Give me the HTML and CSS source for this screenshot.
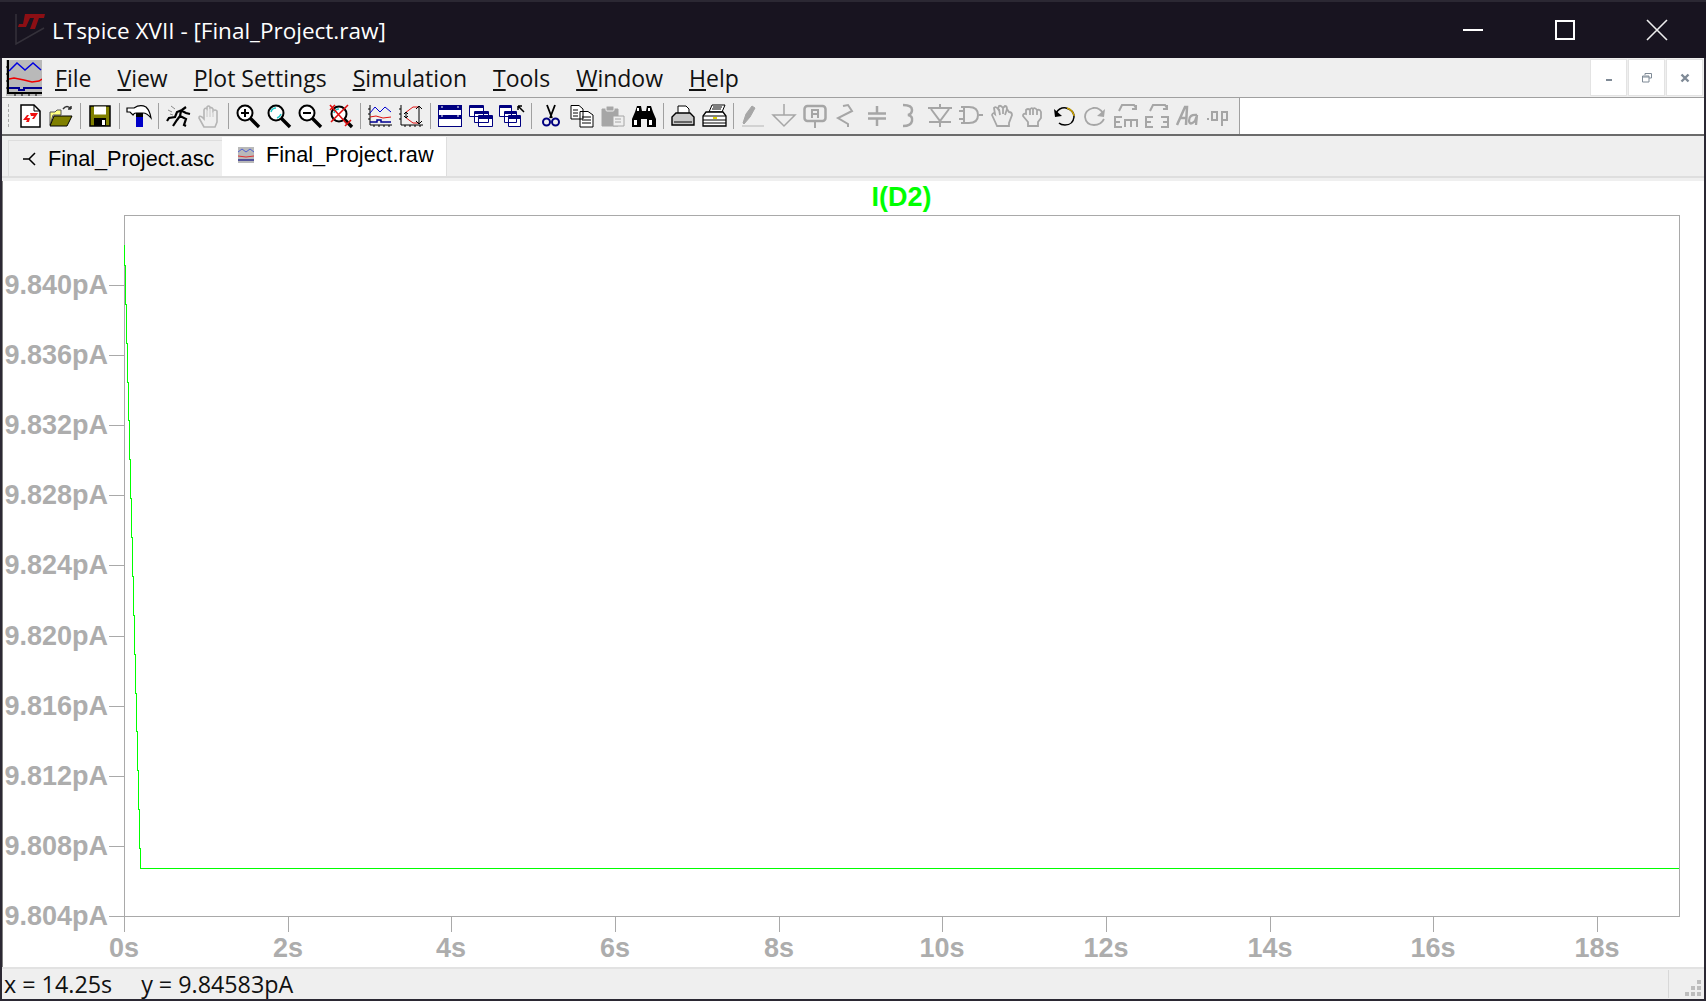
FILE: index.html
```html
<!DOCTYPE html>
<html lang="en">
<head>
    <meta charset="UTF-8">
    <title>LTspice XVII - [Final_Project.raw]</title>
    <link rel="stylesheet" href="styles.css">
</head>
<body>
<div class="window">
    <div class="titlebar">
        <svg class="app-logo" width="32" height="36" viewBox="0 0 32 36">
            <path d="M1 2 L1 32 L29 16" fill="none" stroke="#34313a" stroke-width="1.5"/>
            <path d="M10 2 H30 L29 6 H24 L20 17 H15 L19 6 H15 L11 15 H3 L4 12 H8 Z" fill="#8c0f14"/>
        </svg>
        <span class="app-title">LTspice XVII - [Final_Project.raw]</span>
        <div class="win-buttons">
            <svg class="win-btn" width="22" height="22" viewBox="0 0 22 22"><path d="M1 11 H21" stroke="#fff" stroke-width="2"/></svg>
            <svg class="win-btn" width="22" height="22" viewBox="0 0 22 22"><rect x="2" y="2" width="18" height="18" fill="none" stroke="#fff" stroke-width="2"/></svg>
            <svg class="win-btn" width="22" height="22" viewBox="0 0 22 22"><path d="M1 1 L21 21 M21 1 L1 21" stroke="#eee" stroke-width="1.6"/></svg>
        </div>
    </div>

    <div class="menubar">
        <svg class="menu-icon" width="36" height="36" viewBox="0 0 36 36">
            <rect width="36" height="36" fill="#b9b9b9"/>
            <path d="M2 0 V33 H36" fill="none" stroke="#000" stroke-width="2"/>
            <path d="M0 7 H3 M0 14 H3 M0 21 H3 M0 28 H3 M9 33 V36 M16 33 V36 M23 33 V36 M30 33 V36" stroke="#000"/>
            <path d="M3 11 L11 3 L19 10 L27 3 L35 10" fill="none" stroke="#0000e0" stroke-width="1.5"/>
            <path d="M3 19 L8 18 L18 20 L26 22 L33 21 L36 19" fill="none" stroke="#f00000" stroke-width="1.5"/>
            <path d="M3 28 H13 V30 H18 V28 H36" fill="none" stroke="#000090" stroke-width="2"/>
        </svg>
        <nav class="menu">
            <span><u>F</u>ile</span>
            <span><u>V</u>iew</span>
            <span><u>P</u>lot Settings</span>
            <span><u>S</u>imulation</span>
            <span><u>T</u>ools</span>
            <span><u>W</u>indow</span>
            <span><u>H</u>elp</span>
        </nav>
        <div class="mdi-buttons">
            <div class="mdi-btn"><svg width="8" height="8" viewBox="0 0 8 8"><path d="M1 6 H7" stroke="#7f8a96" stroke-width="2"/></svg></div>
            <div class="mdi-btn"><svg width="10" height="10" viewBox="0 0 10 10"><path d="M3 2 V0.5 H9.5 V5 H7 M0.5 3 H7 V9 H0.5 Z M0.5 4 H7" fill="none" stroke="#7f8a96"/></svg></div>
            <div class="mdi-btn"><svg width="10" height="10" viewBox="0 0 10 10"><path d="M1.5 1.5 L8.5 8.5 M8.5 1.5 L1.5 8.5" stroke="#7f8a96" stroke-width="2.4"/></svg></div>
        </div>
    </div>

    <div class="toolbar">
        <div class="tools">
            <div class="grip"></div>
            <div class="tool"><svg class="ico" viewBox="0 0 24 24"><path d="M3 1 H16 L22 7 V23 H3 Z" fill="#fff" stroke="#000" stroke-width="1.5"/><path d="M16 1 V7 H22" fill="none" stroke="#000"/><path d="M5 16 L9 11 H11 L9 14 H12 L11 18 H8 L9 16 Z M12 9 H20 L16 15 H14 L16 12 H13 Z" fill="#f01010"/></svg></div>
            <div class="tool"><svg class="ico" viewBox="0 0 24 24"><path d="M1 8 H6 L8 6 H12 V11 H4 L1 21 Z" fill="#ffff80" stroke="#555"/><path d="M1 22 L5 12 H23 L18 22 Z" fill="#808000" stroke="#000"/><path d="M14 5 Q18 0 22 5 M22 5 L19 5 M22 5 L22 2" fill="none" stroke="#333" stroke-width="1.5"/></svg></div>
            <div class="sep"></div>
            <div class="tool"><svg class="ico" viewBox="0 0 24 24"><rect x="2" y="2" width="20" height="20" fill="#808000" stroke="#000" stroke-width="1.5"/><rect x="6" y="2.5" width="12" height="8" fill="#fff"/><rect x="6" y="14" width="12" height="8" fill="#000"/><rect x="14" y="16" width="3" height="5" fill="#fff"/></svg></div>
            <div class="sep"></div>
            <div class="tool"><svg class="ico" viewBox="0 0 24 24"><path d="M0 4 H7 Q13 0 19 3 Q23 7 24 14 Q20 9 16 9 H9 Q7 9 6 11 L3 8 H0 Z" fill="#fff" stroke="#000" stroke-width="1.2"/><rect x="9" y="9" width="7" height="4" fill="#000"/><rect x="9" y="13" width="7" height="10" fill="#0000c8"/></svg></div>
            <div class="sep"></div>
            <div class="tool"><svg class="ico" viewBox="0 0 24 24"><path d="M5 2 L9 5 M2 6 L6 8 M4 10 L7 11" stroke="#8a8a8a"/><path d="M20 3 L16 6 L11 8 L9 13 L3 14 L1 17 M15 7 L14 12 L20 15 L18 21 L20 22 M14 12 L11 16 L7 22 M16 7 L20 9 L24 10" fill="none" stroke="#000" stroke-width="2.2"/></svg></div>
            <div class="tool off"><svg class="ico" viewBox="0 0 24 24"><path d="M7 23 L2 14 Q2 11 5 13 L7 15 V6 Q8 3 10 5 V3 Q11.500 1 13 3 V4 Q15 3 16 5 V7 Q18 5 20 7 V18 L18 23 Z" fill="#efefef" stroke="#b5b5b5" stroke-width="1.6"/><path d="M10 5 V13 M13 4 V13 M16 6 V13" stroke="#c8c8c8"/></svg></div>
            <div class="sep"></div>
            <div class="tool"><svg class="ico" viewBox="0 0 24 24"><circle cx="9" cy="9" r="7.500" fill="#fff" stroke="#000" stroke-width="2"/><path d="M5 9 H13 M9 5 V13" stroke="#000" stroke-width="2"/><path d="M14 14 L23 23" stroke="#000" stroke-width="3.400"/></svg></div>
            <div class="tool"><svg class="ico" viewBox="0 0 24 24"><circle cx="9" cy="9" r="7.500" fill="#fff" stroke="#000" stroke-width="2"/><path d="M4 8 Q5 4 9 4 M10 14 Q13 13 14 10" fill="none" stroke="#20c8c8" stroke-width="1.500"/><path d="M14 14 L23 23" stroke="#000" stroke-width="3.400"/></svg></div>
            <div class="tool"><svg class="ico" viewBox="0 0 24 24"><circle cx="9" cy="9" r="7.500" fill="#fff" stroke="#000" stroke-width="2"/><path d="M5 9 H13" stroke="#000" stroke-width="2"/><path d="M14 14 L23 23" stroke="#000" stroke-width="3.400"/></svg></div>
            <div class="tool"><svg class="ico" viewBox="0 0 24 24"><circle cx="10" cy="10" r="7.500" fill="#fff" stroke="#000" stroke-width="2"/><path d="M5 9 Q6 5 10 5" fill="none" stroke="#20c8c8" stroke-width="1.500"/><path d="M15 15 L23 23" stroke="#000" stroke-width="3.400"/><path d="M1 1 L18 20 M19 1 L2 18 M1 6 L6 1 M16 22 L22 16" stroke="#e01010" stroke-width="1.600"/></svg></div>
            <div class="sep"></div>
            <div class="tool"><svg class="ico" viewBox="0 0 24 24"><path d="M2 1 V21 H24 M0 5 H2 M0 10 H2 M0 15 H2 M6 21 V23 M11 21 V23 M16 21 V23 M21 21 V23" fill="none" stroke="#000"/><path d="M2 9 L7 3 L12 8 L17 3 L23 8" fill="none" stroke="#0000d0"/><path d="M2 13 L8 12 L15 14 L23 13" fill="none" stroke="#e01010"/><path d="M2 18 H9 V16 H13 V18 H23" fill="none" stroke="#000090" stroke-width="1.500"/></svg></div>
            <div class="tool"><svg class="ico" viewBox="0 0 24 24"><path d="M2 1 V21 H24 M0 5 H2 M0 10 H2 M0 15 H2 M6 21 V23 M11 21 V23 M16 21 V23 M21 21 V23" fill="none" stroke="#000"/><path d="M6 9 L14 3 H20 M6 13 L14 19 H20" fill="none" stroke="#e01010"/><path d="M20 2 V20 M17 5 L20 2 L23 5 M17 17 L20 20 L23 17 M7 8 V14 M5 10 L7 8 L9 10 M5 12 L7 14 L9 12" fill="none" stroke="#000"/></svg></div>
            <div class="sep"></div>
            <div class="tool"><svg class="ico" viewBox="0 0 24 24"><rect x="0.500" y="1.500" width="23" height="21" fill="#fff" stroke="#000080"/><rect x="1" y="2" width="22" height="4" fill="#000080"/><rect x="1" y="11" width="22" height="4" fill="#000080"/><path d="M3 3 H5 M19 3 H21 M3 12 H5 M19 12 H21" stroke="#fff"/></svg></div>
            <div class="tool"><svg class="ico" viewBox="0 0 24 24"><path d="M0.500 1.500 H14.500 V12.500 H0.500 Z M5.500 7.500 H19.500 V18.500 H5.500 Z M9.500 11.500 H23.500 V22.500 H9.500 Z" fill="#fff" stroke="#000080"/><path d="M1 2 H14 V4 H1 Z M6 8 H19 V10 H6 Z M10 12 H23 V15 H10 Z" fill="#000080"/></svg></div>
            <div class="tool"><svg class="ico wide" viewBox="0 0 26 24"><path d="M0.500 1.500 H12.500 V12.500 H0.500 Z M5.500 7.500 H17.500 V18.500 H5.500 Z M9.500 11.500 H21.500 V22.500 H9.500 Z" fill="#fff" stroke="#000080"/><path d="M1 2 H12 V4 H1 Z M6 8 H17 V10 H6 Z M10 12 H21 V15 H10 Z" fill="#000080"/><path d="M19 2 H23 M19 2 V6 M19 2 L25 8" fill="none" stroke="#000" stroke-width="1.500"/></svg></div>
            <div class="sep"></div>
            <div class="tool"><svg class="ico" viewBox="0 0 24 24"><path d="M8 1 L13 14 M16 1 L11 14" stroke="#000" stroke-width="1.800"/><circle cx="7.500" cy="18" r="3.500" fill="none" stroke="#000080" stroke-width="2"/><circle cx="16.500" cy="18" r="3.500" fill="none" stroke="#000080" stroke-width="2"/></svg></div>
            <div class="tool"><svg class="ico" viewBox="0 0 24 24"><path d="M1 1.500 H9 L13 5 V15 H1 Z M10 7.500 H18 L23 11 V23 H10 Z" fill="#fff" stroke="#000"/><path d="M3 6 H8 M3 9 H8 M3 12 H8 M12 13 H21 M12 16 H21 M12 19 H21" stroke="#000"/></svg></div>
            <div class="tool off"><svg class="ico" viewBox="0 0 24 24"><path d="M1 5 H17 V22 H1 Z" fill="#a6a6a6" stroke="#a6a6a6"/><rect x="5" y="2" width="8" height="5" rx="1" fill="#a6a6a6" stroke="#efefef"/><path d="M12 12 H23 V22 H12 Z" fill="#efefef" stroke="#a6a6a6"/><path d="M14 15 H20 M14 18 H20" stroke="#a6a6a6"/></svg></div>
            <div class="tool"><svg class="ico" viewBox="0 0 24 24"><path d="M3 8 L5 2 H9 L10 7 H14 L15 2 H19 L21 8 L24 15 V23 H15 V15 H9 V23 H0 V15 Z" fill="#000"/><rect x="2" y="16" width="3" height="5" fill="#fff"/><rect x="17" y="16" width="3" height="5" fill="#fff"/><rect x="5" y="4" width="2" height="3" fill="#fff"/><rect x="16" y="4" width="2" height="3" fill="#fff"/></svg></div>
            <div class="sep"></div>
            <div class="tool"><svg class="ico" viewBox="0 0 24 24"><path d="M7 9 V2 H15 L18 5 V9" fill="#fff" stroke="#000"/><path d="M5 9 H19 L23 13 V21 H1 V13 Z" fill="#c8c8c8" stroke="#000" stroke-width="1.400"/><path d="M3 18 H21" stroke="#000"/></svg></div>
            <div class="tool"><svg class="ico" viewBox="0 0 24 24"><path d="M7 8 L10 1 H23 L20 8 Z" fill="#fff" stroke="#000"/><path d="M11 3 H20 M10 5 H19" stroke="#000"/><path d="M4 8 H21 L24 12 V22 H1 V12 Z" fill="#fff" stroke="#000" stroke-width="1.300"/><path d="M1 12 H24 M1 16 H24 M1 19 H24" stroke="#000"/><path d="M11 14 H15" stroke="#e0d000" stroke-width="2"/></svg></div>
            <div class="sep"></div>
            <div class="tool off"><svg class="ico" viewBox="0 0 24 24"><path d="M2 19 L5 10 L11 2 L14 4 L9 13 L3 20 Z" fill="#a6a6a6" stroke="#a6a6a6"/><path d="M1 22 H23" stroke="#b5b5b5"/></svg></div>
            <div class="tool off"><svg class="ico" viewBox="0 0 24 24"><path d="M12 0 V11 M1 11 H23 L12 22 Z" fill="none" stroke="#a6a6a6" stroke-width="1.500"/></svg></div>
            <div class="tool off"><svg class="ico" viewBox="0 0 24 24"><rect x="1.500" y="2" width="21" height="15" rx="3" fill="none" stroke="#a6a6a6" stroke-width="2.500"/><path d="M9 14 V6 H15 V14 M9 10 H15 M12 17 V24" fill="none" stroke="#a6a6a6" stroke-width="2"/></svg></div>
            <div class="tool off"><svg class="ico" viewBox="0 0 24 24"><path d="M9 2 L14 1 L18 7 L4 14 L14 20 V23" fill="none" stroke="#a6a6a6" stroke-width="2"/></svg></div>
            <div class="tool off"><svg class="ico" viewBox="0 0 24 24"><path d="M12 2 V9 M12 15 V22 M3 9.500 H21 M3 14.500 H21" stroke="#a6a6a6" stroke-width="2.500"/></svg></div>
            <div class="tool off"><svg class="ico" viewBox="0 0 24 24"><path d="M7 1 Q16 1 16 6 Q16 10 12 11 Q17 12 16 17 Q15 22 7 22" fill="none" stroke="#a6a6a6" stroke-width="2.500"/></svg></div>
            <div class="tool off dev diode"><svg class="ico" viewBox="0 0 24 24"><path d="M0 4 H24 M1 18 H23 M12 0 V4 M12 18 V23 M3 5 L12 17 L21 5" fill="none" stroke="#a6a6a6" stroke-width="2"/></svg></div>
            <div class="tool off dev"><svg class="ico" viewBox="0 0 24 24"><path d="M0 7 H4 M0 15 H4 M20 11 H24 M2 3 H10 Q19 3 19 11 Q19 19 10 19 H2 H5 V3" fill="none" stroke="#a6a6a6" stroke-width="2"/></svg></div>
            <div class="tool off dev"><svg class="ico" viewBox="0 0 24 24"><path d="M7 22 L2 11 Q3 8 5 10 L4 4 Q6 2 8 5 L9 2 Q11 1 13 4 L15 2 Q17 2 17 5 L19 8 Q22 8 22 11 L19 19 V22 Z M9 5 L10 11 M13 4 L13 10 M17 5 L15 11" fill="none" stroke="#a6a6a6" stroke-width="1.800"/></svg></div>
            <div class="tool off dev"><svg class="ico" viewBox="0 0 24 24"><path d="M7 22 V18 L2 12 Q2 9 5 10 V6 Q7 4 9 6 Q10 3 12 5 Q14 3 16 6 Q19 5 20 8 V14 L17 18 V22 Z M9 6 V11 M12 5 V11 M16 6 V11" fill="none" stroke="#a6a6a6" stroke-width="1.800"/></svg></div>
            <div class="tool dev"><svg class="ico" viewBox="0 0 24 24"><path d="M4 9 Q8 3 14 4 Q22 6 22 13 Q21 21 13 21 Q9 21 7 19" fill="none" stroke="#000" stroke-width="1.500"/><path d="M15 4 Q21 6 22 12" fill="none" stroke="#c8a000" stroke-width="1.500"/><path d="M2 5 L3 13 L10 12 Z" fill="#000"/></svg></div>
            <div class="tool off dev"><svg class="ico" viewBox="0 0 24 24"><path d="M20 9 Q16 3 10 4 Q2 6 2 13 Q3 21 11 21 Q18 21 21 15" fill="none" stroke="#a6a6a6" stroke-width="1.800"/><path d="M22 5 L21 13 L14 12 Z" fill="#a6a6a6"/></svg></div>
            <div class="tool off dev"><svg class="ico" viewBox="0 0 24 24"><path d="M8 13 H1 V23 H8 M1 18 H6 M11 23 V16 H23 V23 M17 16 V23 M5 7 L8 1 H20 L22 4 M18 5 H22 V1" fill="none" stroke="#a6a6a6" stroke-width="2"/></svg></div>
            <div class="tool off dev"><svg class="ico" viewBox="0 0 24 24"><path d="M8 13 H1 V23 H8 M1 18 H6 M16 13 H23 V23 H16 M18 18 H23 M5 7 L8 1 H20 L22 4 M18 5 H22 V1" fill="none" stroke="#a6a6a6" stroke-width="2"/></svg></div>
            <div class="tool off dev"><svg class="ico" viewBox="0 0 24 24"><path d="M1 21 L9 3 H11 L10 21 M4 14 H10" fill="none" stroke="#a6a6a6" stroke-width="2.500"/><path d="M21 11 Q13 10 13 17 Q14 22 19 17 L21 11 L20 21" fill="none" stroke="#a6a6a6" stroke-width="2.300"/></svg></div>
            <div class="tool off dev"><svg class="ico" viewBox="0 0 24 24"><rect x="1" y="14" width="2" height="2" fill="#a6a6a6"/><rect x="6" y="8" width="5" height="8" fill="none" stroke="#a6a6a6" stroke-width="2"/><path d="M16 22 V8 H21 V16 H16" fill="none" stroke="#a6a6a6" stroke-width="2"/></svg></div>
        </div>
    </div>

    <div class="tabstrip">
        <div class="tab">
            <svg class="tab-icon" width="14" height="14" viewBox="0 0 14 14"><path d="M0 7 H6 L12 1 M6 7 L12 13" fill="none" stroke="#000" stroke-width="1.500"/></svg>
            Final_Project.asc
        </div>
        <div class="tab active">
            <svg class="tab-icon" width="16" height="16" viewBox="0 0 16 16"><rect width="16" height="16" fill="#b9b9b9"/><path d="M0 5 L4 2 L8 5 L12 2 L16 5" fill="none" stroke="#5060d0"/><path d="M0 9 L8 10 L16 9" fill="none" stroke="#e03030"/><path d="M0 13 H16" stroke="#303090" stroke-width="1.500"/></svg>
            Final_Project.raw
        </div>
    </div>

    <div class="plot">
        <svg class="plot-svg" viewBox="3 181 1701 786">
            <text class="trace-name" x="901.5" y="206" text-anchor="middle">I(D2)</text>
            <g class="axes">
                <rect x="124.500" y="215.500" width="1555" height="701"/>
                <path d="M109 285.500 H124 M109 355.500 H124 M109 425.500 H124 M109 495.500 H124 M109 565.500 H124 M109 636.500 H124 M109 706.500 H124 M109 776.500 H124 M109 846.500 H124 M109 916.500 H124"/>
                <path d="M124.500 917 V932 M288.500 917 V932 M451.500 917 V932 M615.500 917 V932 M779.500 917 V932 M942.500 917 V932 M1106.500 917 V932 M1270.500 917 V932 M1433.500 917 V932 M1597.500 917 V932"/>
            </g>
            <g class="y-labels">
                <text x="108" y="294">9.840pA</text>
                <text x="108" y="364">9.836pA</text>
                <text x="108" y="434">9.832pA</text>
                <text x="108" y="504">9.828pA</text>
                <text x="108" y="574">9.824pA</text>
                <text x="108" y="645">9.820pA</text>
                <text x="108" y="715">9.816pA</text>
                <text x="108" y="785">9.812pA</text>
                <text x="108" y="855">9.808pA</text>
                <text x="108" y="925">9.804pA</text>
            </g>
            <g class="x-labels">
                <text x="124" y="957">0s</text>
                <text x="288" y="957">2s</text>
                <text x="451" y="957">4s</text>
                <text x="615" y="957">6s</text>
                <text x="779" y="957">8s</text>
                <text x="942" y="957">10s</text>
                <text x="1106" y="957">12s</text>
                <text x="1270" y="957">14s</text>
                <text x="1433" y="957">16s</text>
                <text x="1597" y="957">18s</text>
            </g>
            <path class="trace" d="M124.500 245 V265 H125.500 V304 H126.500 V343 H127.500 V382 H128.500 V420 H129.500 V459 H130.500 V498 H131.500 V537 H132.500 V576 H133.500 V615 H134.500 V654 H135.500 V693 H136.500 V731 H137.500 V770 H138.500 V809 H139.500 V848 H140.500 V868 H142 V868.500 H1679"/>
        </svg>
    </div>

    <div class="statusbar">
        <span class="status-text">x = 14.25s<span class="status-y">y = 9.84583pA</span></span>
        <div class="status-grip">
            <svg width="18" height="18" viewBox="0 0 18 18"><path d="M13 0 h4 v4 h-4 z M7 6 h4 v4 h-4 z M13 6 h4 v4 h-4 z M1 12 h4 v4 h-4 z M7 12 h4 v4 h-4 z M13 12 h4 v4 h-4 z" fill="#bdbdbd"/></svg>
        </div>
    </div>
</div>
</body>
</html>
```

FILE: styles.css
```css
html, body {
    height: 100%;
    margin: 0;
    padding: 0;
    overflow: hidden;
}
body {
    font-family: "Open Sans", "Noto Sans", sans-serif;
    background-color: #2b2833;
}
.window {
    display: flex;
    flex-direction: column;
    height: 1001px;
    box-sizing: border-box;
    border: 2px solid #2b2833;
    background-color: #efefef;
}
.titlebar {
    display: flex;
    align-items: center;
    height: 56px;
    flex-shrink: 0;
    margin: 0 -2px;
    padding-left: 15px;
    background-color: #181420;
    color: #fff;
}
.app-logo {
    margin-right: 5px;
}
.app-title {
    font-size: 22.500px;
}
.win-buttons {
    display: flex;
    margin-left: auto;
    margin-right: 38px;
    gap: 70px;
}
.menubar {
    display: flex;
    align-items: center;
    height: 40px;
    flex-shrink: 0;
    box-sizing: border-box;
    padding-left: 4px;
    border-bottom: 1px solid #a0a0a0;
}
.menu {
    display: flex;
    gap: 26px;
    margin-left: 13px;
    font-size: 23px;
    color: #111;
}
.mdi-buttons {
    display: flex;
    gap: 1px;
    margin-left: auto;
    margin-right: 1px;
}
.mdi-btn {
    display: flex;
    align-items: center;
    justify-content: center;
    width: 37px;
    height: 37px;
    box-sizing: border-box;
    background-color: #fff;
    border: 1px solid #e3e3e3;
}
.toolbar {
    height: 38px;
    flex-shrink: 0;
    box-sizing: border-box;
    background-color: #fff;
    border-bottom: 2px solid #6b6b6b;
}
.tools {
    display: flex;
    align-items: center;
    width: 1238px;
    height: 100%;
    box-sizing: border-box;
    background-color: #efefef;
    border-right: 1px solid #a0a0a0;
}
.grip {
    width: 2px;
    height: 26px;
    margin: 0 5px;
    background-image: radial-gradient(#a8a8a8 1px, transparent 1px);
    background-size: 3px 5px;
}
.tool {
    display: flex;
    align-items: center;
    justify-content: center;
    width: 31px;
    height: 100%;
}
.tool.dev {
    width: 30.900px;
}
.tool.diode {
    margin-left: 2px;
}
.ico {
    width: 24px;
    height: 24px;
    overflow: visible;
}
.ico.wide {
    width: 26px;
}
.sep {
    width: 1px;
    height: 26px;
    margin: 0 3.500px;
    background-color: #a0a0a0;
}
.tabstrip {
    display: flex;
    align-items: flex-end;
    height: 45px;
    flex-shrink: 0;
    box-sizing: border-box;
    padding-left: 6px;
    border-bottom: 3px solid #efefef;
    box-shadow: inset 0 -2px 0 #dedede;
}
.tab {
    display: flex;
    align-items: center;
    gap: 11px;
    width: 214px;
    height: 36px;
    box-sizing: border-box;
    margin-bottom: 2px;
    padding-left: 14px;
    border: 1px solid #dedede;
    border-right: none;
    border-bottom: none;
    font-family: "Liberation Sans", Arial, sans-serif;
    font-size: 21.700px;
    color: #000;
}
.tab.active {
    width: 225px;
    height: 39px;
    gap: 12px;
    padding: 0 0 4px 16px;
    background-color: #fff;
    border: none;
    border-right: 1px solid #dedede;
}
.plot {
    flex: 1;
    min-height: 0;
    box-sizing: border-box;
    border-left: 1px solid #808080;
    background-color: #fff;
}
.plot-svg {
    display: block;
    width: 100%;
    height: 100%;
}
.axes {
    fill: none;
    stroke: #a9a9a9;
    stroke-width: 1;
}
.y-labels, .x-labels, .trace-name {
    font-family: "Liberation Sans", Arial, sans-serif;
    font-size: 27px;
    font-weight: bold;
}
.y-labels {
    fill: #adadad;
    text-anchor: end;
}
.x-labels {
    fill: #adadad;
    text-anchor: middle;
}
.trace-name {
    fill: #00ff00;
}
.trace {
    fill: none;
    stroke: #00ff00;
    stroke-width: 1;
    shape-rendering: crispEdges;
}
.statusbar {
    display: flex;
    align-items: center;
    height: 32px;
    flex-shrink: 0;
    box-sizing: border-box;
    border-top: 2px solid #e2e2e2;
    padding-left: 2px;
}
.status-text {
    font-size: 23.300px;
    color: #111;
}
.status-y {
    margin-left: 29px;
}
.status-grip {
    display: flex;
    align-items: flex-end;
    justify-content: flex-end;
    width: 36px;
    height: 28px;
    box-sizing: border-box;
    margin-left: auto;
    padding: 0 2px 0 0;
    border-left: 1px solid #d8d8d8;
}
```
